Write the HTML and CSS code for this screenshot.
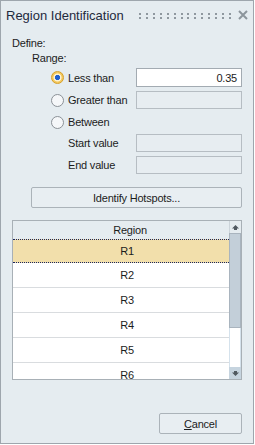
FILE: index.html
```html
<!DOCTYPE html>
<html>
<head>
<meta charset="utf-8">
<title>Region Identification</title>
<link rel="stylesheet" href="styles.css">
</head>
<body>
<div class="win">
  <div class="titlebar">
    <span class="title">Region Identification</span>
    <svg class="grip" width="92" height="6" viewBox="0 0 92 6" shape-rendering="crispEdges">
      <g fill="#8f989f">
        <rect x="0" y="0" width="2" height="2"/><rect x="0" y="4" width="2" height="2"/>
        <rect x="7" y="0" width="2" height="2"/><rect x="7" y="4" width="2" height="2"/>
        <rect x="14" y="0" width="2" height="2"/><rect x="14" y="4" width="2" height="2"/>
        <rect x="21" y="0" width="2" height="2"/><rect x="21" y="4" width="2" height="2"/>
        <rect x="28" y="0" width="2" height="2"/><rect x="28" y="4" width="2" height="2"/>
        <rect x="35" y="0" width="2" height="2"/><rect x="35" y="4" width="2" height="2"/>
        <rect x="42" y="0" width="2" height="2"/><rect x="42" y="4" width="2" height="2"/>
        <rect x="48" y="0" width="2" height="2"/><rect x="48" y="4" width="2" height="2"/>
        <rect x="55" y="0" width="2" height="2"/><rect x="55" y="4" width="2" height="2"/>
        <rect x="62" y="0" width="2" height="2"/><rect x="62" y="4" width="2" height="2"/>
        <rect x="69" y="0" width="2" height="2"/><rect x="69" y="4" width="2" height="2"/>
        <rect x="76" y="0" width="2" height="2"/><rect x="76" y="4" width="2" height="2"/>
        <rect x="83" y="0" width="2" height="2"/><rect x="83" y="4" width="2" height="2"/>
        <rect x="90" y="0" width="2" height="2"/><rect x="90" y="4" width="2" height="2"/>
      </g>
    </svg>
    <svg class="close" width="10" height="10" viewBox="0 0 10 10">
      <path d="M1 1 L9 9 M9 1 L1 9" stroke="#8c959c" stroke-width="2" fill="none"/>
    </svg>
  </div>

  <div class="content">
    <div class="define">Define:</div>
    <div class="range">Range:</div>

    <div class="row r1">
      <span class="radio on"></span><span class="olabel">Less than</span>
      <div class="box active">0.35</div>
    </div>
    <div class="row r2">
      <span class="radio"></span><span class="olabel">Greater than</span>
      <div class="box"></div>
    </div>
    <div class="row r3">
      <span class="radio"></span><span class="olabel">Between</span>
    </div>
    <div class="row r4 sub">
      <span class="olabel">Start value</span>
      <div class="box"></div>
    </div>
    <div class="row r5 sub">
      <span class="olabel">End value</span>
      <div class="box"></div>
    </div>

    <button class="btn wide">Identify Hotspots...</button>

    <div class="grid">
      <div class="main">
        <div class="th">Region</div>
        <div class="tr sel">R1</div>
        <div class="tr">R2</div>
        <div class="tr">R3</div>
        <div class="tr">R4</div>
        <div class="tr">R5</div>
        <div class="tr">R6</div>
      </div>
      <div class="sb">
        <div class="sb-up">
          <svg width="7" height="5" viewBox="0 0 7 5"><path d="M3.5 0 L7 3.5 H5 V5 H2 V3.5 H0 Z" fill="#505960"/></svg>
        </div>
        <div class="sb-thumb"></div>
        <div class="sb-track"></div>
        <div class="sb-down">
          <svg width="7" height="5" viewBox="0 0 7 5"><path d="M2 0 H5 V1.5 H7 L3.5 5 L0 1.5 H2 Z" fill="#505960"/></svg>
        </div>
      </div>
    </div>

    <div class="footer">
      <button class="btn cancel"><u>C</u>ancel</button>
    </div>
  </div>
</div>
</body>
</html>
```

FILE: styles.css
```css
* { box-sizing: border-box; }

html, body {
  margin: 0;
  padding: 0;
  background: #ffffff;
}

body {
  font-family: "Liberation Sans", Arial, sans-serif;
  font-size: 11px;
  letter-spacing: -0.2px;
  color: #1c1c1c;
}

.win {
  width: 254px;
  height: 444px;
  border: 1px solid #9ea6ad;
  background: #e5ecf0;
  display: flex;
  flex-direction: column;
}

.titlebar {
  height: 28px;
  flex: none;
  display: flex;
  align-items: center;
  padding-left: 5px;
}

.title {
  font-size: 13px;
  letter-spacing: 0;
  color: #1f2a3c;
}

.grip {
  margin-left: auto;
  display: block;
  margin-top: 1px;
}

.close {
  display: block;
  margin-left: 7px;
  margin-right: 5px;
}

.content {
  flex: 1;
  display: flex;
  flex-direction: column;
  padding: 0 11px 9px 11px;
}

.define {
  margin-top: 6px;
  height: 15px;
  display: flex;
  align-items: center;
}

.range {
  height: 16px;
  display: flex;
  align-items: center;
  padding-left: 20px;
}

.row {
  display: flex;
  align-items: center;
  padding-left: 39px;
}

.row.sub { padding-left: 56px; }

.r1 { height: 23px; }
.r2 { height: 22px; }
.r3 { height: 22px; }
.r4 { height: 20px; }
.r5 { height: 24px; }

.radio {
  width: 13px;
  height: 13px;
  flex: none;
  border-radius: 50%;
  border: 1px solid #8b9197;
  background: #f5f7f9;
}

.radio.on {
  border-color: #d6a02a;
  background: radial-gradient(circle at center, #1f5fcf 0 2.4px, #fdf2d2 2.9px 3.6px, #f4c95e 4.4px);
}

.olabel {
  width: 68px;
  flex: none;
  margin-left: 4px;
  white-space: nowrap;
}

.row.sub .olabel { margin-left: 0; }

.box {
  width: 106px;
  height: 18px;
  flex: none;
  border: 1px solid #b6bdc3;
  background: #e7edf1;
}

.box.active {
  height: 19px;
  background: #ffffff;
  border-color: #a3abb2;
  display: flex;
  align-items: center;
  justify-content: flex-end;
  padding-right: 4px;
  color: #1c1c1c;
}

.btn {
  font: inherit;
  letter-spacing: inherit;
  color: #1c1c1c;
  background: #e8eef2;
  border: 1px solid #abb3b9;
  border-radius: 2px;
  height: 21px;
  padding: 0;
  flex: none;
}

.btn.wide {
  margin-top: 10px;
  margin-left: 19px;
  width: 211px;
}

.grid {
  margin-top: 12px;
  width: 230px;
  height: 160px;
  flex: none;
  border: 1px solid #a8b0b6;
  background: #ffffff;
  display: flex;
}

.main {
  flex: 1;
  display: flex;
  flex-direction: column;
  overflow: hidden;
}

.th {
  height: 18px;
  flex: none;
  background: #e5ecf0;
  display: flex;
  align-items: center;
  justify-content: center;
  padding-left: 18px;
}

.tr {
  height: 25px;
  flex: none;
  border-bottom: 1px solid #d9dcdf;
  display: flex;
  align-items: center;
  justify-content: center;
  padding-left: 12px;
}

.tr.sel {
  height: 24px;
  background: #f2dfab;
  border-top: 1px dotted #1b2760;
  border-bottom: 1px dotted #1b2760;
}

.sb {
  width: 12px;
  flex: none;
  display: flex;
  flex-direction: column;
}

.sb-up {
  height: 12px;
  flex: none;
  background: #e5ecf0;
  border-left: 1px solid #ccd4da;
  display: flex;
  align-items: center;
  justify-content: center;
}

.sb-thumb {
  height: 95px;
  flex: none;
  background: #c3cfd9;
  border: 1px solid #a9b4be;
}

.sb-track {
  flex: 1;
  background: #ffffff;
  border-left: 1px solid #d5e2ec;
  border-right: 1px solid #d5e2ec;
}

.sb-down {
  height: 12px;
  flex: none;
  background: #c6d4df;
  display: flex;
  align-items: center;
  justify-content: center;
}

.sb svg { display: block; }

.footer {
  margin-top: auto;
  display: flex;
  justify-content: flex-end;
}

.btn.cancel {
  width: 83px;
}
```
